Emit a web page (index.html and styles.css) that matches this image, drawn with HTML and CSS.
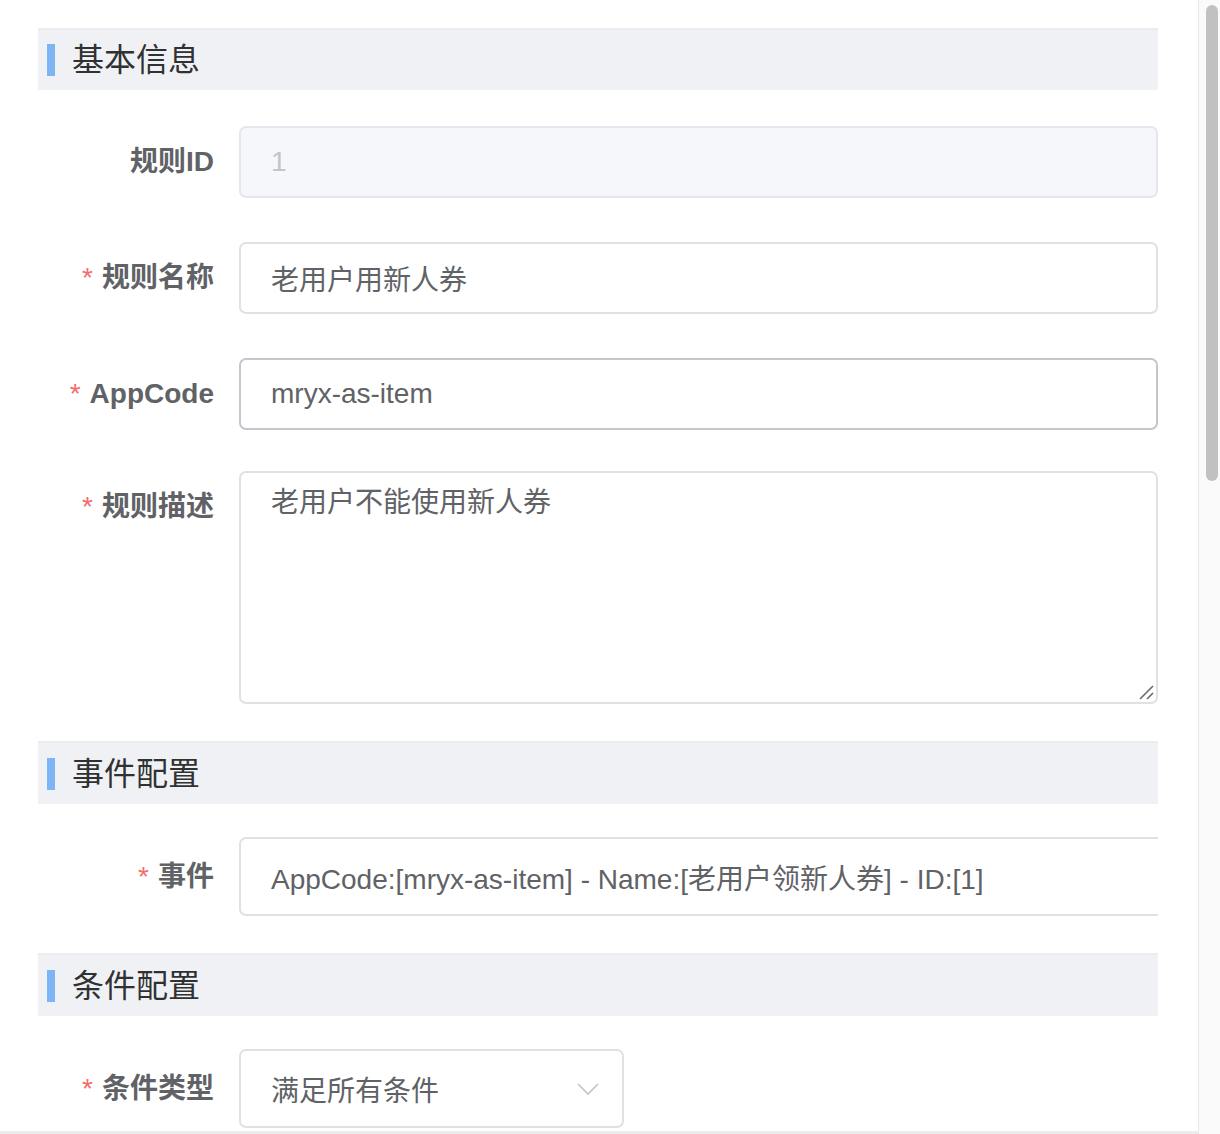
FILE: index.html
```html
<!DOCTYPE html>
<html lang="zh-CN">
<head>
<meta charset="utf-8">
<title>规则配置</title>
<link rel="stylesheet" href="styles.css">
</head>
<body>
<div class="page">
  <div class="form">
    <div class="section-title first"><span class="bar"></span><span class="title-text">基本信息</span></div>

    <div class="form-item">
      <div class="label">规则ID</div>
      <div class="input is-disabled">1</div>
    </div>

    <div class="form-item">
      <div class="label"><span class="star">*</span>规则名称</div>
      <div class="input">老用户用新人券</div>
    </div>

    <div class="form-item gap-sm">
      <div class="label"><span class="star">*</span>AppCode</div>
      <div class="input is-hover">mryx-as-item</div>
    </div>

    <div class="form-item top gap-md">
      <div class="label"><span class="star">*</span>规则描述</div>
      <div class="textarea">老用户不能使用新人券
        <svg class="grip" width="16" height="16" viewBox="0 0 16 16"><path d="M15 2 L2 15 M15 9 L9 15" stroke="#6b6b6b" stroke-width="1.6" fill="none"/></svg>
      </div>
    </div>

    <div class="section-title"><span class="bar"></span><span class="title-text">事件配置</span></div>

    <div class="form-item gap-md">
      <div class="label"><span class="star">*</span>事件</div>
      <div class="input tall wide">AppCode:[mryx-as-item] - Name:[老用户领新人券] - ID:[1]</div>
    </div>

    <div class="section-title"><span class="bar"></span><span class="title-text">条件配置</span></div>

    <div class="form-item">
      <div class="label"><span class="star">*</span>条件类型</div>
      <div class="input tall select"><span class="select-text">满足所有条件</span>
        <svg class="chevron" width="24" height="14" viewBox="0 0 24 14"><path d="M2 2 L12 12 L22 2" stroke="#c0c4cc" stroke-width="1.6" fill="none"/></svg>
      </div>
    </div>
  </div>
</div>
<div class="vscroll"><div class="thumb"></div></div>
<div class="hscroll"></div>
</body>
</html>
```

FILE: styles.css
```css
html, body {
  margin: 0;
  padding: 0;
  background: #ffffff;
  height: 1134px;
  overflow: hidden;
}

body {
  font-family: "Liberation Sans", "Noto Sans CJK SC", sans-serif;
  color: #606266;
}

.page {
  padding: 28px 0 0 38px;
}

.form {
  width: 1120px;
  overflow: hidden;
}

.section-title {
  height: 63px;
  box-sizing: border-box;
  background: #f0f1f4;
  border-top: 2px solid #ebecf0;
  display: flex;
  align-items: center;
  margin-bottom: 33px;
}

.section-title.first {
  height: 62px;
  margin-bottom: 36px;
}

.bar {
  width: 8px;
  height: 32px;
  background: #7db4f6;
  margin-left: 9px;
  margin-right: 17px;
}

.title-text {
  font-size: 32px;
  color: #303133;
  line-height: 1;
}

.form-item {
  display: flex;
  align-items: center;
  margin-bottom: 44px;
}

.form-item.top {
  align-items: flex-start;
}

.form-item.gap-sm {
  margin-bottom: 41px;
}

.form-item.gap-md {
  margin-bottom: 37px;
}

.label {
  width: 201px;
  flex-shrink: 0;
  box-sizing: border-box;
  padding-right: 25px;
  text-align: right;
  font-size: 28px;
  font-weight: 700;
  color: #606266;
  line-height: 72px;
}

.star {
  color: #f56c6c;
  font-weight: 400;
  margin-right: 9px;
}

.input {
  flex: 1;
  height: 72px;
  box-sizing: border-box;
  border: 2px solid #dfe1e6;
  border-radius: 7px;
  padding: 0 30px;
  display: flex;
  align-items: center;
  font-size: 28px;
  color: #606266;
  background: #ffffff;
  white-space: nowrap;
}

.input.is-disabled {
  background: #f5f7fa;
  border-color: #e4e7ed;
  color: #c0c4cc;
}

.input.is-hover {
  border-color: #c3c6cd;
}

.input.tall {
  height: 79px;
}

.input.wide {
  flex: 0 0 1000px;
}

.input.select {
  flex: 0 0 385px;
  justify-content: space-between;
  padding-right: 22px;
}

.chevron {
  display: block;
}

.textarea {
  flex: 1;
  position: relative;
  height: 233px;
  box-sizing: border-box;
  border: 2px solid #dfe1e6;
  border-radius: 7px;
  padding: 9px 30px;
  font-size: 28px;
  line-height: 42px;
  color: #606266;
}

.grip {
  position: absolute;
  right: 2px;
  bottom: 2px;
}

.vscroll {
  position: fixed;
  top: 0;
  right: 0;
  width: 21px;
  height: 1134px;
  background: #fafafa;
  border-left: 1px solid #e8e8e8;
}

.thumb {
  position: absolute;
  top: 5px;
  left: 7px;
  width: 12px;
  height: 476px;
  border-radius: 6px;
  background: #c1c1c1;
}

.hscroll {
  position: fixed;
  left: 0;
  bottom: 0;
  width: 1198px;
  height: 3px;
  background: #ececec;
}
```
